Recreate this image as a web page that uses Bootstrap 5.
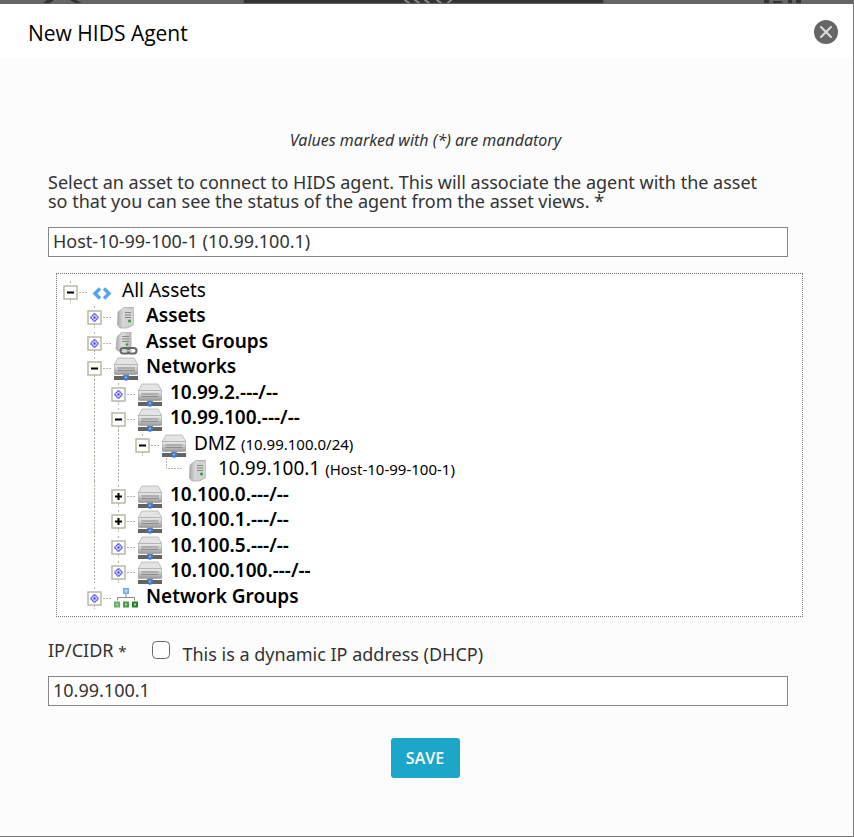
<!DOCTYPE html>
<html lang="en">
<head>
<meta charset="utf-8">
<meta name="viewport" content="width=device-width, initial-scale=1">
<title>New HIDS Agent</title>
<link href="https://cdn.jsdelivr.net/npm/bootstrap@5.3.0/dist/css/bootstrap.min.css" rel="stylesheet">
<style>
  body { font-family: "Noto Sans", "Open Sans", sans-serif; font-size: 18px; line-height: 19px; color: #333; background: #fcfcfc; }
  .dialog-pane { border-right: 1px solid #777; border-bottom: 1px solid #777; }
  .backdrop-strip { height: 4px; background: #666; }
  .dialog-head { height: 54px; padding: 2px 15px 0 28px; }
  .dialog-title { font-family: "Open Sans", sans-serif; font-size: 21px; line-height: 28px; padding-top: 2px; color: #000; }
  .close-btn { width: 24px; height: 24px; }
  .dialog-body { padding: 72px 50px 16px 48px; }
  .hint { font-size: 16px; line-height: 20px; margin-bottom: 23px; }
  .field-block { margin-right: 15px; }
  .field-block .form-control { height: 30px; padding: 0 4px 2px; border-color: #888; color: #333; font-size: 18px; line-height: 26px; background: #fff; }
  .asset-tree { margin: 16px 0 24px 8px; padding: 3px 0 8px 1px; border: 1px dotted #777; background: #fff; font-size: 19px; }
  .tree-row { height: 25px; line-height: 27px; white-space: nowrap; }
  .tree-row:nth-child(even) { height: 26px; }
  .tree-row svg { display: block; flex: none; overflow: visible; }
  .tree-row button { width: 32px; height: 26px; }
  .tree-row a { color: #000; margin-left: 8px; }
  .tree-row a b { font-weight: 600; }
  .tree-row small { font-size: 15px; }
  .tree-icon { margin-top: 4px; }
  .req { font-size: 15px; }
  .ip-check { width: 18px; height: 18px; border: 1px solid #666; border-radius: 3px; background: #fff; }
  .ip-row { gap: 26px; margin-bottom: 12px; }
  .save-btn { font-family: "Open Sans", sans-serif; font-size: 16px; font-weight: 600; height: 40px; width: 69px; margin-left: 14px; border-radius: 3px; background: #1ca6ca; color: #fff; }
</style>
</head>
<body>
<svg width="0" height="0" class="position-absolute" aria-hidden="true">
  <defs>
    <linearGradient id="metal" x1="0" y1="0" x2="0" y2="1"><stop offset="0" stop-color="#eee"/><stop offset="1" stop-color="#999"/></linearGradient>
    <linearGradient id="side" x1="0" y1="0" x2="1" y2="0"><stop offset="0" stop-color="#aaa"/><stop offset=".4" stop-color="#ddd"/><stop offset="1" stop-color="#bbb"/></linearGradient>
    <symbol id="guide" viewBox="0 0 24 26"><path d="M12.500 0V26" stroke="#aaa99c" stroke-dasharray="2 1.500" fill="none"/></symbol>
    <symbol id="box" viewBox="0 0 32 26"><path d="M12.500 4V7M12.500 22V26M21 15.500H29" stroke="#b5b3a5" stroke-dasharray="2 1" fill="none"/><rect x="6" y="9" width="13" height="13" fill="#fff" stroke="#b9b8a6" stroke-width="1.500"/></symbol>
    <symbol id="minus" viewBox="0 0 32 26"><use href="#box" width="32" height="26"/><path d="M9 15.500H16" stroke="#000" stroke-width="2"/></symbol>
    <symbol id="plus" viewBox="0 0 32 26"><use href="#box" width="32" height="26"/><path d="M9 15.500H16M12.500 12V19" stroke="#000" stroke-width="2"/></symbol>
    <symbol id="lazy" viewBox="0 0 32 26"><use href="#box" width="32" height="26"/><path d="M12.500 11.500L16.500 15.500L12.500 19.500L8.500 15.500Z" fill="#dde" stroke="#55f" stroke-width="1.500" stroke-dasharray="1.400 .5"/><rect x="11.500" y="14.500" width="2" height="2" fill="#33f"/></symbol>
    <symbol id="elbow" viewBox="0 0 32 26"><path d="M12.500 3V13.500H29" stroke="#b5b3a5" stroke-dasharray="2 1" fill="none"/></symbol>
    <symbol id="code" viewBox="0 0 24 24"><path d="M10 7.500L5 12.500L10 17.500M14 7.500L19 12.500L14 17.500" fill="none" stroke="#58a3ea" stroke-width="3.500"/></symbol>
    <symbol id="host" viewBox="0 0 24 24"><path d="M4 6L10 1.500H19.500V19L13 22H6L3.500 19Z" fill="url(#side)" stroke="#aaa" stroke-width=".8"/><path d="M10 4L19.500 2V19L10 21Z" fill="#d2d2d2"/><path d="M11 6.500H17M11 9H17M11 11.500H17" stroke="#888"/><circle cx="15.500" cy="15" r="1.500" fill="#2b9f35"/></symbol>
    <symbol id="group" viewBox="0 0 24 24"><path d="M3 5L8 0H17V15L12 19H4L2 17Z" fill="url(#side)" stroke="#aaa" stroke-width=".8"/><path d="M8 4.500H15M8 7H15M8 9.500H15" stroke="#888"/><circle cx="13" cy="12.500" r="1.300" fill="#2b9f35"/><g fill="none" stroke="#666" stroke-width="2"><rect x="6.500" y="16" width="9" height="5.500" rx="2.700"/><rect x="13.500" y="16" width="9" height="5.500" rx="2.700"/></g><path d="M11 18.700H18" stroke="#ccc" stroke-width="1.500"/></symbol>
    <symbol id="drive" viewBox="0 0 24 24"><path d="M4 1H20L24 8H0Z" fill="#e4e4e4" stroke="#aaa" stroke-width=".7"/><rect y="7.500" width="24" height="10" rx="1.500" fill="url(#metal)" stroke="#999" stroke-width=".6"/><path d="M3.500 11H20.500M3.500 13.500H20.500" stroke="#8b8b8b"/><rect y="19" width="24" height="4" fill="#636363"/><rect x="9" y="17.500" width="6" height="2" fill="#888"/><circle cx="12" cy="21" r="2.700" fill="#3978d8"/><circle cx="12" cy="20.500" r="1.100" fill="#8fbcf5"/></symbol>
    <symbol id="netgroup" viewBox="0 0 24 24"><path d="M12 7V10.500M3.500 13.500V10.500H20.500V13.500" fill="none" stroke="#888"/><rect x="9" y="1" width="6" height="6" fill="#76a9ea"/><rect x="10.500" y="2.500" width="3" height="3" fill="#b6d4f8"/><rect y="14.500" width="6" height="6" fill="#62b45b"/><rect x="9" y="14.500" width="6" height="6" fill="#479e43"/><rect x="18" y="14.500" width="6" height="6" fill="#2a7e2b"/><path d="M2 17.500H4M11 17.500H13M20 17.500H22" stroke="#a2dc98" stroke-width="2"/></symbol>
  </defs>
</svg>

<div class="dialog-pane min-vh-100 d-flex flex-column">
  <div class="backdrop-strip" aria-hidden="true">
    <svg class="d-block" width="100%" height="3" viewBox="0 0 854 3" preserveAspectRatio="none"><path d="M244 0H604V3H244Z" fill="#333"/><path d="M43 3L47 0H54L50 3ZM70 0H76L82 3H75ZM765 0H770V3H765ZM774 1H783V3H774ZM789 0H793V3H789ZM797 0H802V3H797Z" fill="#333"/><path d="M405 0L410 3M415 0L420 3M425 0L430 3M437 0L442 3M452 0L448 3" stroke="#888" stroke-width="2"/></svg>
  </div>
  <header class="dialog-head d-flex align-items-center justify-content-between bg-white">
    <h1 class="dialog-title fw-normal mb-0">New HIDS Agent</h1>
    <button type="button" class="close-btn btn p-0 border-0 d-block" aria-label="Close">
      <svg class="d-block" width="24" height="24" viewBox="0 0 24 24"><circle cx="12" cy="12" r="12" fill="#666"/><path d="M7 7L17 17M17 7L7 17" stroke="#ddd" stroke-width="2" stroke-linecap="round"/></svg>
    </button>
  </header>

  <form class="dialog-body" onsubmit="return false">
    <p class="hint fst-italic text-center me-n1">Values marked with (*) are mandatory</p>

    <div class="field-block">
      <label for="asset" class="d-block mb-3">Select an asset to connect to HIDS agent. This will associate the agent with the asset<br>so that you can see the status of the agent from the asset views. *</label>
      <input id="asset" type="text" class="form-control rounded-0" value="Host-10-99-100-1 (10.99.100.1)">
    </div>

    <div class="asset-tree" role="tree" aria-label="Assets">
      <div class="tree-row d-flex" role="treeitem"><button type="button" class="btn p-0 border-0" aria-label="Collapse All Assets"><svg width="32" height="26"><use href="#minus"/></svg></button><svg class="tree-icon" width="24" height="24"><use href="#code"/></svg><a href="#" class="text-decoration-none">All Assets</a></div>
      <div class="tree-row d-flex ps-4" role="treeitem"><button type="button" class="btn p-0 border-0" aria-label="Expand Assets"><svg width="32" height="26"><use href="#lazy"/></svg></button><svg class="tree-icon" width="24" height="24"><use href="#host"/></svg><a href="#" class="text-decoration-none"><b>Assets</b></a></div>
      <div class="tree-row d-flex ps-4" role="treeitem"><button type="button" class="btn p-0 border-0" aria-label="Expand Asset Groups"><svg width="32" height="26"><use href="#lazy"/></svg></button><svg class="tree-icon" width="24" height="24"><use href="#group"/></svg><a href="#" class="text-decoration-none"><b>Asset Groups</b></a></div>
      <div class="tree-row d-flex ps-4" role="treeitem"><button type="button" class="btn p-0 border-0" aria-label="Collapse Networks"><svg width="32" height="26"><use href="#minus"/></svg></button><svg class="tree-icon" width="24" height="24"><use href="#drive"/></svg><a href="#" class="text-decoration-none"><b>Networks</b></a></div>
      <div class="tree-row d-flex ps-4" role="treeitem"><svg width="24" height="26"><use href="#guide"/></svg><button type="button" class="btn p-0 border-0" aria-label="Expand 10.99.2"><svg width="32" height="26"><use href="#lazy"/></svg></button><svg class="tree-icon" width="24" height="24"><use href="#drive"/></svg><a href="#" class="text-decoration-none"><b>10.99.2.---/--</b></a></div>
      <div class="tree-row d-flex ps-4" role="treeitem"><svg width="24" height="26"><use href="#guide"/></svg><button type="button" class="btn p-0 border-0" aria-label="Collapse 10.99.100"><svg width="32" height="26"><use href="#minus"/></svg></button><svg class="tree-icon" width="24" height="24"><use href="#drive"/></svg><a href="#" class="text-decoration-none"><b>10.99.100.---/--</b></a></div>
      <div class="tree-row d-flex ps-4" role="treeitem"><svg width="24" height="26"><use href="#guide"/></svg><svg width="24" height="26"><use href="#guide"/></svg><button type="button" class="btn p-0 border-0" aria-label="Collapse DMZ"><svg width="32" height="26"><use href="#minus"/></svg></button><svg class="tree-icon" width="24" height="24"><use href="#drive"/></svg><a href="#" class="text-decoration-none">DMZ <small>(10.99.100.0/24)</small></a></div>
      <div class="tree-row d-flex ps-4" role="treeitem"><svg width="24" height="26"><use href="#guide"/></svg><svg width="48" height="26"><use href="#guide" width="24"/></svg><svg width="32" height="26"><use href="#elbow"/></svg><svg class="tree-icon" width="24" height="24"><use href="#host"/></svg><a href="#" class="text-decoration-none">10.99.100.1 <small>(Host-10-99-100-1)</small></a></div>
      <div class="tree-row d-flex ps-4" role="treeitem"><svg width="24" height="26"><use href="#guide"/></svg><button type="button" class="btn p-0 border-0" aria-label="Expand 10.100.0"><svg width="32" height="26"><use href="#plus"/></svg></button><svg class="tree-icon" width="24" height="24"><use href="#drive"/></svg><a href="#" class="text-decoration-none"><b>10.100.0.---/--</b></a></div>
      <div class="tree-row d-flex ps-4" role="treeitem"><svg width="24" height="26"><use href="#guide"/></svg><button type="button" class="btn p-0 border-0" aria-label="Expand 10.100.1"><svg width="32" height="26"><use href="#plus"/></svg></button><svg class="tree-icon" width="24" height="24"><use href="#drive"/></svg><a href="#" class="text-decoration-none"><b>10.100.1.---/--</b></a></div>
      <div class="tree-row d-flex ps-4" role="treeitem"><svg width="24" height="26"><use href="#guide"/></svg><button type="button" class="btn p-0 border-0" aria-label="Expand 10.100.5"><svg width="32" height="26"><use href="#lazy"/></svg></button><svg class="tree-icon" width="24" height="24"><use href="#drive"/></svg><a href="#" class="text-decoration-none"><b>10.100.5.---/--</b></a></div>
      <div class="tree-row d-flex ps-4" role="treeitem"><svg width="24" height="26"><use href="#guide"/></svg><button type="button" class="btn p-0 border-0" aria-label="Expand 10.100.100"><svg width="32" height="26"><use href="#lazy"/></svg></button><svg class="tree-icon" width="24" height="24"><use href="#drive"/></svg><a href="#" class="text-decoration-none"><b>10.100.100.---/--</b></a></div>
      <div class="tree-row d-flex ps-4" role="treeitem"><button type="button" class="btn p-0 border-0" aria-label="Expand Network Groups"><svg width="32" height="26"><use href="#lazy"/></svg></button><svg class="tree-icon" width="24" height="24"><use href="#netgroup"/></svg><a href="#" class="text-decoration-none"><b>Network Groups</b></a></div>
    </div>

    <div class="field-block">
      <div class="ip-row d-flex align-items-start">
        <label for="ip">IP/CIDR <span class="req">*</span></label>
        <div class="d-flex align-items-start">
          <input id="dhcp" type="checkbox" class="form-check-input ip-check m-0 flex-shrink-0">
          <label for="dhcp" class="pt-1 ms-2 ps-1">This is a dynamic IP address (DHCP)</label>
        </div>
      </div>
      <input id="ip" type="text" class="form-control rounded-0" value="10.99.100.1">
      <div class="text-center pt-2 mt-4">
        <button type="submit" class="save-btn btn border-0 p-0">SAVE</button>
      </div>
    </div>
  </form>
</div>
<script src="https://cdn.jsdelivr.net/npm/bootstrap@5.3.0/dist/js/bootstrap.bundle.min.js"></script>
</body>
</html>
